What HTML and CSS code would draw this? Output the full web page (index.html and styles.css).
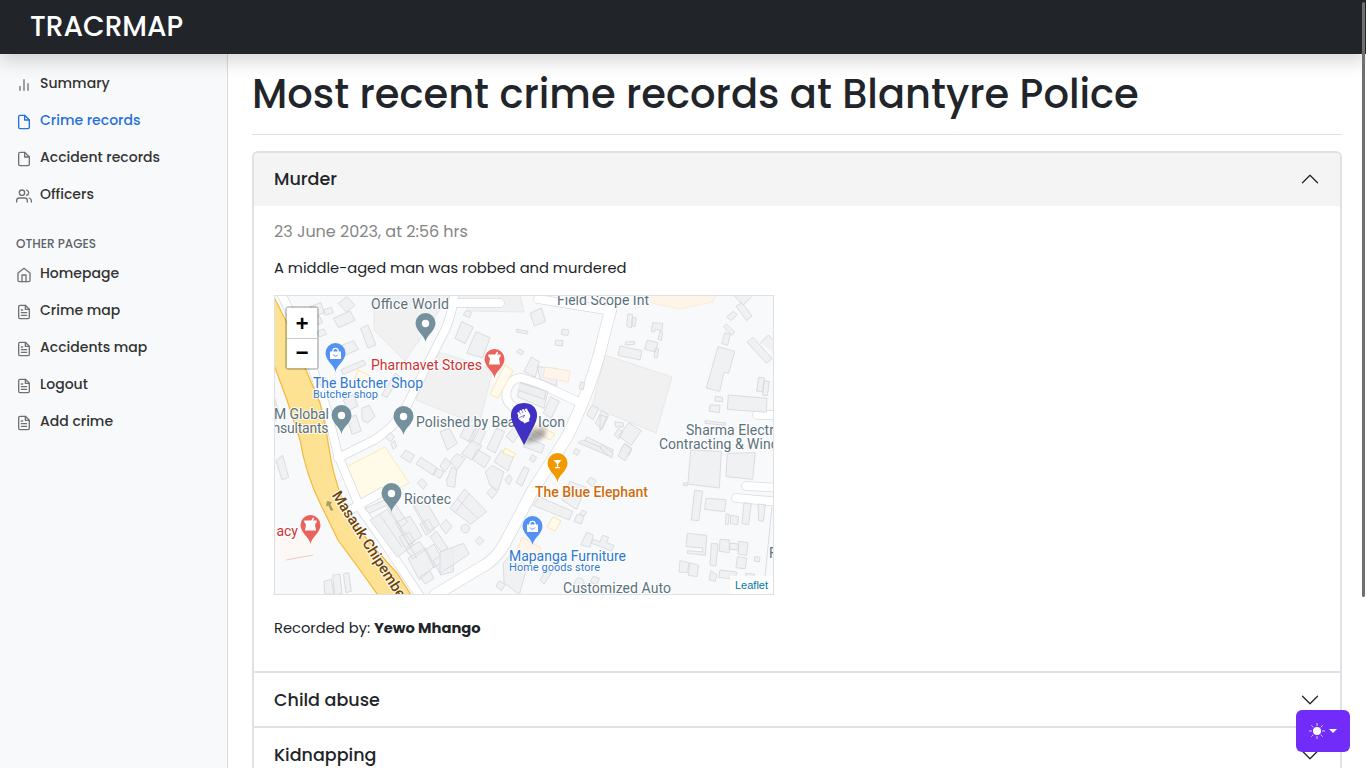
FILE: index.html
```
<!DOCTYPE html>
<html lang="en">
<head>
<meta charset="utf-8">
<title>TRACRMAP</title>
<link rel="stylesheet" href="styles.css">
</head>
<body>
<svg width="0" height="0" class="defs">
  <defs>
    <symbol id="file" viewBox="0 0 24 24"><path d="M13 2H6a2 2 0 0 0-2 2v16a2 2 0 0 0 2 2h12a2 2 0 0 0 2-2V9z"/><path d="M13 2v7h7"/></symbol>
    <symbol id="filetext" viewBox="0 0 24 24"><path d="M14 2H6a2 2 0 0 0-2 2v16a2 2 0 0 0 2 2h12a2 2 0 0 0 2-2V8z"/><path d="M14 2v6h6M16 13H8M16 17H8M10 9H8"/></symbol>
    <symbol id="chev" viewBox="0 0 16 16"><path d="M2 5l6 6 6-6"/></symbol>
    <symbol id="pin" viewBox="0 0 20 30" overflow="visible"><path d="M10 29C9 22 0 18 0 10a10 10 0 0 1 20 0c0 8-9 12-10 19z"/></symbol>
  </defs>
</svg>
<header class="topbar"><a class="brand">TRACRMAP</a></header>
<div class="layout">
  <nav class="sidebar">
    <ul class="menu">
      <li><svg class="ico" viewBox="0 0 24 24"><path d="M18 20V10M12 20V4M6 20v-6"/></svg><span>Summary</span></li>
      <li class="active"><svg class="ico"><use href="#file"/></svg><span>Crime records</span></li>
      <li><svg class="ico"><use href="#file"/></svg><span>Accident records</span></li>
      <li><svg class="ico" viewBox="0 0 24 24"><path d="M17 21v-2a4 4 0 0 0-4-4H5a4 4 0 0 0-4 4v2M23 21v-2a4 4 0 0 0-3-3.870M16 3.130a4 4 0 0 1 0 7.750"/><circle cx="9" cy="7" r="4"/></svg><span>Officers</span></li>
    </ul>
    <h6 class="group">OTHER PAGES</h6>
    <ul class="menu">
      <li><svg class="ico" viewBox="0 0 24 24"><path d="M3 9l9-7 9 7v11a2 2 0 0 1-2 2H5a2 2 0 0 1-2-2z"/><path d="M9 22V12h6v10"/></svg><span>Homepage</span></li>
      <li><svg class="ico"><use href="#filetext"/></svg><span>Crime map</span></li>
      <li><svg class="ico"><use href="#filetext"/></svg><span>Accidents map</span></li>
      <li><svg class="ico"><use href="#filetext"/></svg><span>Logout</span></li>
      <li><svg class="ico"><use href="#filetext"/></svg><span>Add crime</span></li>
    </ul>
  </nav>
  <main class="content">
    <h1 class="title">Most recent crime records at Blantyre Police</h1>
    <section class="accordion">
      <div class="acc-head open"><span>Murder</span><svg class="chev up"><use href="#chev"/></svg></div>
      <div class="acc-body">
        <p class="date">23 June 2023, at 2:56 hrs</p>
        <p class="desc">A middle-aged man was robbed and murdered</p>
        <div class="map">
          <svg class="tiles" viewBox="275 296 498 298">
            <rect x="274" y="295" width="500" height="300" fill="#f8f9fb"/>
            <g class="zones">
              <path d="M374 295L450 295L405 361L374 330z"/>
              <path d="M432 350L493 369L479 425L416 400z"/>
              <path d="M605 355L672 377L656 433L592 407z"/>
              <path d="M450 295H520L524 312L470 311z"/>
              <path class="warm" d="M645 295H716L713 302L679 309L652 303z"/>
              <path class="pale" d="M275 528L320 537 313 555 275 562z"/>
              <path class="sand" d="M346 467L385 447L409 483L362 507z"/>
            </g>
            <g class="road-edge">
              <path d="M282 295L303 340L327 410L338 455L360 508L386 545L421 598"/>
              <path d="M455 290Q452 320 440 340L411 397Q400 424 374 440L338 458"/>
              <path class="wide" d="M616 290L604 335Q594 382 567 437L533 490L505 543Q496 560 480 568L435 595"/>
              <path d="M538 299L612 311M452 303H500M583 404L540 384L522 378Q510 378 507 390Q504 402 515 408L530 418M352 509L382 492M757 415H780M746 486L780 488M736 498L780 502"/>
            </g>
            <g class="road">
              <path d="M282 295L303 340L327 410L338 455L360 508L386 545L421 598"/>
              <path d="M455 290Q452 320 440 340L411 397Q400 424 374 440L338 458"/>
              <path class="wide" d="M616 290L604 335Q594 382 567 437L533 490L505 543Q496 560 480 568L435 595"/>
              <path d="M538 299L612 311M452 303H500M583 404L540 384L522 378Q510 378 507 390Q504 402 515 408L530 418M352 509L382 492M757 415H780M746 486L780 488M736 498L780 502"/>
            </g>
            <g class="bld">
              <g transform="translate(270 290) scale(.3333)">
                <path d="M120 50l32-12 12 30-32 12zM110 92l38-14 10 20-40 16zM205 40l26-20 24 26-26 20zM190 85l50-22 16 28-50 22zM140 125l22-8 8 16-22 8zM272 115l22-10 24 60-24 10zM200 172l50-20 16 26-50 22zM212 240l68-30 8 14-68 30zM145 270l20-8 8 20-20 8zM220 330l30-16 14 34-30 14zM232 385l26-10 16 48-28 10zM275 355l22-10 18 34-22 20-16-8zM335 315l40-65 16 10-40 62zM160 60l24-8 6 16-24 8zM14 325l18 56-18 12zM346 442l14-14 14 12-12 16zM362 462l12-10 6 18-10 8z"/>
              </g>
              <g transform="translate(440 290) scale(.3333)">
                <path d="M45 145l20-50 35 16-25 50zM80 190l28-65 42 18-22 60zM70 75l8-14 16 6-6 16zM270 70l34-16 13 40-34 14zM230 118l34 6-2 8-34-6zM366 118l20 2-2 16-20-2zM347 150l22 2-2 16-22-3zM230 185l8-8 14 8-8 10zM252 245l22-44 24 14-12 46zM292 230l60 6-2 52-50-20zM232 320l10-43 82 28-12 50zM310 370l22-50 26 14-24 50zM418 296l4-20 12 3-4 20zM440 375l16-30 20 10-16 34zM466 400l20-40 20 16-20 42zM430 460l10-20 80 40-8 14zM60 440l20-40 30 15-18 42zM95 460l22-45 20 10-22 48zM140 475l30-60 24 10-28 64zM0 425l28-10 24 45-30 20zM198 440l24-30 22 12-24 36zM250 470l14-26 50 22-10 24z"/>
                <path d="M240 278l78 26-5 24-80-28M105 415l-20 40"/>
              </g>
              <g transform="translate(600 290) scale(.3333)">
                <path d="M80 108l4-36 14 2-4 40zM97 82l12 2-4 26-8-2zM158 98l30 2-2 22-20-4-2 8-10-2zM180 124l8 2-4 26-10-4zM76 156l28-2v9l-28 2zM60 168l66 14-6 28-66-14zM142 150l32 8-8 28-32-8zM166 174l10 2-4 28-10-2zM380 80l20-16 12 10-20 18zM408 48l18-10 30 40-16 14zM370 110l10-8 24 24-8 10zM375 128l16 4-8 34-18-6zM354 170l50 14-18 66-14-3-13 57-40-10zM441 156l18-14 58 64-18 14zM480 160l25-25 30 30v30M476 262l18 2-6 42-18-3zM492 272l16 3-6 42-14-2zM385 315l116 10-2 42-117-9zM346 319l22 3-1 13-22-2zM330 345l30 1-2 22-30-4zM315 392l62 7v7l-62-6zM45 395l26 4-2 13-22-2zM86 398l38 24-30 44-38-28zM55 415l14 10-12 22-14-12zM62 480l14-20 20 16-8 18zM0 375l22 6-22 42z"/>
                <path d="M395 10l35 35 25-25"/>
              </g>
              <g transform="translate(270 440) scale(.3333)">
                <path d="M18 62l20-16 18 66-20 8zM392 50l16-20 26 16-14 22zM438 72l14-20 50 32-12 22zM490 100l10-16 22 12-12 20zM442 128l14-12 16 16-12 16zM300 240l52-32 78 106-48 38zM352 200l20-14 40 60-18 16zM376 248l44-20 36 60-40 26zM425 185l34-18 50 86-30 20zM388 290l30-14 16 28-28 20zM408 330l40-26 18 26-38 26zM450 252l24-14 20 30-26 18zM480 290l20-16 34 50-20 12zM414 355l52-32 28 55-46 42zM466 330l26-18 28 50-28 22zM490 360l60-35v70l-38 10zM450 410l30-18 12 24-26 16zM162 424l22-6 8 44h-28zM188 406l22-4 6 58-22 4zM220 402l16-4 8 56-16 4zM284 206l60-26 10 14-56 26z"/>
                <path d="M430 200l46 80M390 265l50 90M330 225l66 96"/>
              </g>
              <g transform="translate(440 440) scale(.3333)">
                <path d="M30 65l20-24 26 14-24 34zM64 42l32-40 30 16-30 42zM96 58l16-30 40 24-18 32zM162 65l22-34 38 16-18 46zM136 96l20-20 36 20-18 56-24-16zM140 158l16-16 16 14-16 20zM228 128l24-48 16 8-22 50zM268 58l9-14 13 8-10 16zM30 205l44-58 66 68-48 38zM20 120l16-40 14 10-6 52-22-4zM0 78l16-24 18 16-20 26zM0 258l18-20 18 20-18 24zM0 336l70-26 18 32-88 58zM106 302l12-12 14 12-14 14zM195 120l12-16 10 12-10 18zM280 196l16-26 102 44-10 26zM402 244l10-22 20 6-8 24zM366 180l24-56 48 18-28 66zM440 126l12-14 16 10-10 18zM422 315l18-38 20 8-10 36zM454 310l6-12 20 8 8-20 18 6-6 16 22 8-8 18-30-14zM190 370l22-26 50 34-24 86-46-36zM400 40l6-14 14 6-8 14zM430 0l88 36-6 14-98-42zM168 438l10-16 18 12-12 18zM300 420l20-30 14 10-22 32zM340 380l16-10 10 14-16 12zM450 425l10-16 18 6-8 20zM420 222l8-12 12 6-8 12z"/>
                <circle cx="76" cy="266" r="13"/><circle cx="418" cy="428" r="14"/>
                <path d="M54 178l60 58M88 160l-44 60"/>
              </g>
              <g transform="translate(600 440) scale(.3333)">
                <path d="M54 48l18-36 22 14-18 36zM0 24l8-10 32 26-6 14zM272 30l92 4-6 110-96-12v5h-12v-8h14zM382 40l84-2-8 80-80-8zM284 150l24 4-12 88-22-2zM318 175l60 4-4 36-60-7zM378 222l10 1-4 32-8-2zM392 226l24 4-3 24-22-3zM432 188l22 4-8 62-20-3zM474 192l22 2-6 50-14-2zM262 280l58 6-4 60-54-6v-8l46 4v-12l-50-4zM334 310l20 2-6 66-18-2zM360 298l28 2v38l-30-4zM390 310l26 2-1 18-26-2zM416 304l28 4-4 38-26-4zM412 350l28 4-4 32-28-3zM464 350l16 2-2 14-15-3zM240 362l26 6-3 30-26-2zM270 368l26 8-5 34-26-4zM332 392l18 12-4 20-18-4zM360 390l50 6-4 22-50-6zM438 400l25 3-2 18-24-3z"/>
                <path d="M516 200l-22 220" fill="none"/>
              </g>
            </g>
            <g class="tint">
              <path d="M505 365L513 371L498 398L490 394z"/><path class="warmline" d="M545 367L570 371L568 382L543 377z"/>
              <path d="M538 425L555 434L550 440L533 430zM553 517L561 521L555 531L547 527zM505 448L516 454 513 457 503 453zM358 370L370 376 361 388 353 384z"/>
              <path class="warmline" d="M522 537L541 548L536 560L517 550z"/>
            </g>
            <path d="M286 560L313 555" stroke="#f3bdb4" stroke-width=".8"/>
            <path class="hwy" d="M268 283L274 297L287 323L303 363L320 403Q327 432 331 460Q337 490 350 517L370 543L397 573L413 598H380L360 570L338 540L320 503Q306 475 300 440L287 400L274 365L266 350z"/>
            <path d="M327 501l5 1-1.500 2.500 3 6-3 0-2-5-2.500 1z" fill="#a99a67"/>
            <g class="lbl">
              <text x="371" y="309" textLength="78">Office World</text>
              <text x="557" y="304.500" textLength="92">Field Scope Int</text>
              <text class="red" x="371" y="369.500" textLength="111">Pharmavet Stores</text>
              <text class="blue" x="313" y="387.500" textLength="110">The Butcher Shop</text>
              <text class="blue small" x="313" y="398" textLength="65">Butcher shop</text>
              <text x="274" y="418.500" textLength="55">M Global</text>
              <text x="328.500" y="432.500" text-anchor="end" textLength="56">nsultants</text>
              <text x="416" y="426.500" textLength="149">Polished by Beauty Icon</text>
              <text x="404" y="503.500" textLength="47">Ricotec</text>
              <text class="red" x="298" y="535.500" text-anchor="end">acy</text>
              <text class="orange" x="535" y="497" textLength="113">The Blue Elephant</text>
              <text class="blue" x="509" y="560.500" textLength="117">Mapanga Furniture</text>
              <text class="blue small" x="509" y="571" textLength="91">Home goods store</text>
              <text x="563" y="592.500" textLength="108">Customized Auto</text>
              <text x="686" y="434.500" textLength="88">Sharma Electr</text>
              <text x="659" y="448.500" textLength="119">Contracting &amp; Winc</text>
              <text x="769" y="557.500">F</text>
              <text class="street" transform="translate(331.500 495) rotate(57.500)" textLength="124">Masauk Chipembe</text>
            </g>
            <g>
              <g fill="#73909c"><use href="#pin" x="415.500" y="313" width="20" height="30"/><use href="#pin" x="331.500" y="405" width="20" height="30"/><use href="#pin" x="393.500" y="406" width="20" height="30"/><use href="#pin" x="381.500" y="483" width="20" height="30"/></g>
              <g fill="#fff"><circle cx="425.500" cy="323.500" r="3.700"/><circle cx="341.500" cy="415.500" r="3.700"/><circle cx="403.500" cy="416.500" r="3.700"/><circle cx="391.500" cy="493.500" r="3.700"/></g>
              <g fill="#5491f5"><use href="#pin" x="325.500" y="343" width="20" height="30"/><use href="#pin" x="522.500" y="516" width="20" height="30"/></g>
              <g fill="#ea6259"><use href="#pin" x="484.500" y="349" width="20" height="30"/><use href="#pin" x="300.500" y="515" width="20" height="30"/></g>
              <use href="#pin" x="547.500" y="453" width="20" height="30" fill="#f29900"/>
              <g id="bag1"><path d="M330 351.500h11v7.500h-11z" fill="#fff"/><path d="M332.800 352v-1a2.700 2.700 0 0 1 5.400 0v1" fill="none" stroke="#fff" stroke-width="1.300"/><path d="M333 354.500q2.500 3.500 5 0" fill="none" stroke="#5491f5"/></g>
              <use href="#bag1" x="197" y="173"/>
              <g id="mortar" fill="#fff"><path d="M488.300 354.500h12.400v2q-2 1-1.600 3l1 5h-11.200l1-5q.4-2-1.600-3z"/><path d="M495 355l2-3.500 1.200.7-1.500 3.300z"/></g>
              <use href="#mortar" x="-184" y="166"/>
              <path d="M553.500 460h8l-3.400 4v3h2v1.200h-5.200V467h2v-3z" fill="#fff"/>
              <path class="shadow" d="M524 444L531 431Q543 425 546 431Q547 436 539 440z"/>
              <path d="M524 445L514 426Q509 416 512 410Q515 403 524 403Q533 403 536 410Q539 416 534 426z" fill="#4030c4"/>
              <g transform="translate(524 416) rotate(-25)" fill="#fff"><path d="M-6-1q0-2 2-2h9q1 0 1 1v3q0 3-3 4v2h-6v-2q-3-2-3-6z"/><rect x="-5" y="-6" width="2.300" height="4" rx="1"/><rect x="-2.200" y="-6.800" width="2.300" height="4.500" rx="1"/><rect x=".6" y="-6.800" width="2.300" height="4.500" rx="1"/><rect x="3.400" y="-6" width="2.300" height="4" rx="1"/><path d="M-5-.5h6l-3 2" fill="none" stroke="#4030c4" stroke-width=".6"/></g>
            </g>
          </svg>
          <div class="zoomer"><a>+</a><a>−</a></div>
          <a class="leaflet">Leaflet</a>
        </div>
        <p class="by">Recorded by: <b>Yewo Mhango</b></p>
      </div>
      <div class="acc-head"><span>Child abuse</span><svg class="chev"><use href="#chev"/></svg></div>
      <div class="acc-head"><span>Kidnapping</span><svg class="chev"><use href="#chev"/></svg></div>
    </section>
  </main>
</div>
<button class="theme">
  <svg width="16" height="16" viewBox="0 0 16 16" fill="#fff"><circle cx="8" cy="8" r="4"/><path d="M8 0v3M8 13v3M0 8h3M13 8h3M2.300 2.300l2 2M11.700 11.700l2 2M2.300 13.700l2-2M11.700 4.300l2-2" stroke="#fff" opacity=".75"/></svg>
  <i class="caret"></i>
</button>
<div class="scroll"></div>
</body>
</html>
```
FILE: styles.css
```
* { box-sizing: border-box; }
html, body { height: 100%; overflow: hidden; }
body { margin: 0; background: #fff; color: #212529; font-family: Poppins, Inter, sans-serif; font-size: 14.700px; }
.defs { position: absolute; }
.topbar { position: relative; z-index: 2; height: 54px; padding-left: 30px; background: #212529; box-shadow: 0 8px 16px rgba(0,0,0,.15); display: flex; align-items: center; }
.brand { color: #fff; font-size: 28px; font-weight: 500; line-height: 52px; }
.layout { display: flex; height: 714px; }
.sidebar { width: 228px; flex: none; background: #f8f9fb; border-right: 1px solid #d9dcdf; padding-top: 11px; }
.menu { list-style: none; margin: 0; padding: 0; }
.menu li { height: 37px; padding: 0 16px; display: flex; align-items: center; gap: 8px; font-size: 14px; font-weight: 500; color: #333; }
.ico { width: 16px; height: 16px; margin-top: 3px; fill: none; stroke: #727272; stroke-width: 2; stroke-linecap: round; stroke-linejoin: round; }
.menu .active { color: #2470dc; }
.active .ico { stroke: #2470dc; }
.group { margin: 24px 16px 4px; font-size: 12px; line-height: 14px; font-weight: 500; color: #5c6369; }
.content { flex: 1; padding: 0 24px; }
.title { margin: 0 0 16px; height: 81px; border-bottom: 1px solid #dee2e6; font-size: 40px; line-height: 80px; font-weight: 500; white-space: nowrap; }
.accordion { width: 1090px; border: 2px solid #dee2e6; border-radius: 6px; overflow: hidden; height: 640px; }
.acc-head { height: 55px; padding: 0 20px; display: flex; align-items: center; justify-content: space-between; font-size: 17.500px; font-weight: 500; border-top: 2px solid #dee2e6; }
.acc-head.open { height: 53px; padding-bottom: 2px; border-top: 0; background: #f4f4f4; }
.chev { width: 20px; height: 20px; fill: none; stroke: #212529; stroke-width: 1; stroke-linecap: round; stroke-linejoin: round; }
.up { transform: rotate(180deg); }
.acc-body { height: 465px; padding: 14px 20px 0; }
.acc-body p { margin: 0; }
.acc-body .date { line-height: 24px; font-size: 16px; color: #868686; }
.acc-body .desc { margin: 13px 0 15px; line-height: 23px; }
.map { position: relative; width: 500px; height: 300px; border: 1px solid #dee2e6; overflow: hidden; }
.tiles { display: block; width: 498px; height: 298px; }
.zones { fill: #f1f1f1; stroke: #e1e2e3; stroke-width: .7; }
.zones .warm { fill: #fff4e8; stroke: #fbe6cd; }
.zones .pale { fill: #fcf8f6; stroke: none; }
.zones .sand { fill: #fffbe8; stroke: #fae49f; }
.road-edge, .road { fill: none; stroke-linejoin: round; stroke-linecap: round; }
.road-edge { stroke: #d9dbde; stroke-width: 9.500; }
.road { stroke: #fff; stroke-width: 8; }
.road-edge .wide { stroke-width: 12.500; }
.road .wide { stroke-width: 11; }
.bld { fill: #edeff1; stroke: #d6d8db; stroke-width: 2.600; fill-opacity: .8; }
.tint { fill: #fffaf0; stroke: #fce29b; stroke-width: .9; }
.tint .warmline { fill: #fff5eb; stroke: #fbe3cf; }
.hwy { fill: #fde293; stroke: #f5b83a; stroke-width: 1.200; }
.lbl { font: 14px Roboto, sans-serif; fill: #5b717c; stroke: #fff; stroke-width: 2px; stroke-opacity: .85; paint-order: stroke; stroke-linejoin: round; }
.lbl .red { fill: #cd3336; }
.lbl .blue { fill: #2e78d2; }
.lbl .orange { fill: #cf6c0d; font-weight: 500; }
.lbl .small { font-size: 11px; }
.lbl .street { fill: #6d4308; font-weight: 500; font-size: 15px; }
.shadow { fill: rgba(0,0,0,.32); filter: blur(2px); }
.zoomer { position: absolute; left: 10px; top: 10px; width: 34px; border: 2px solid rgba(0,0,0,.2); background-clip: padding-box; border-radius: 4px; }
.zoomer a { display: block; height: 30px; background: #fff; color: #000; text-align: center; font: bold 22px/35px "Liberation Mono", monospace; }
.zoomer a + a { border-top: 1px solid #ccc; line-height: 32px; }
.leaflet { position: absolute; right: 0; bottom: 0; padding: 0 5px; background: rgba(255,255,255,.8); color: #0078a8; font: 11px/18px "Liberation Sans", sans-serif; }
.acc-body .by { margin-top: 22px; line-height: 23px; }
.theme { position: absolute; left: 1296px; top: 710px; width: 54px; height: 42px; border: 0; border-radius: 6px; background: #712cf9; display: flex; align-items: center; justify-content: center; gap: 4px; padding: 0; }
.caret { border: 4.200px solid transparent; border-top-color: #fff; border-bottom: 0; }
.scroll { position: absolute; z-index: 3; left: 1362px; top: 2px; width: 3px; height: 595px; background: #707070; border-radius: 2px; }
```
